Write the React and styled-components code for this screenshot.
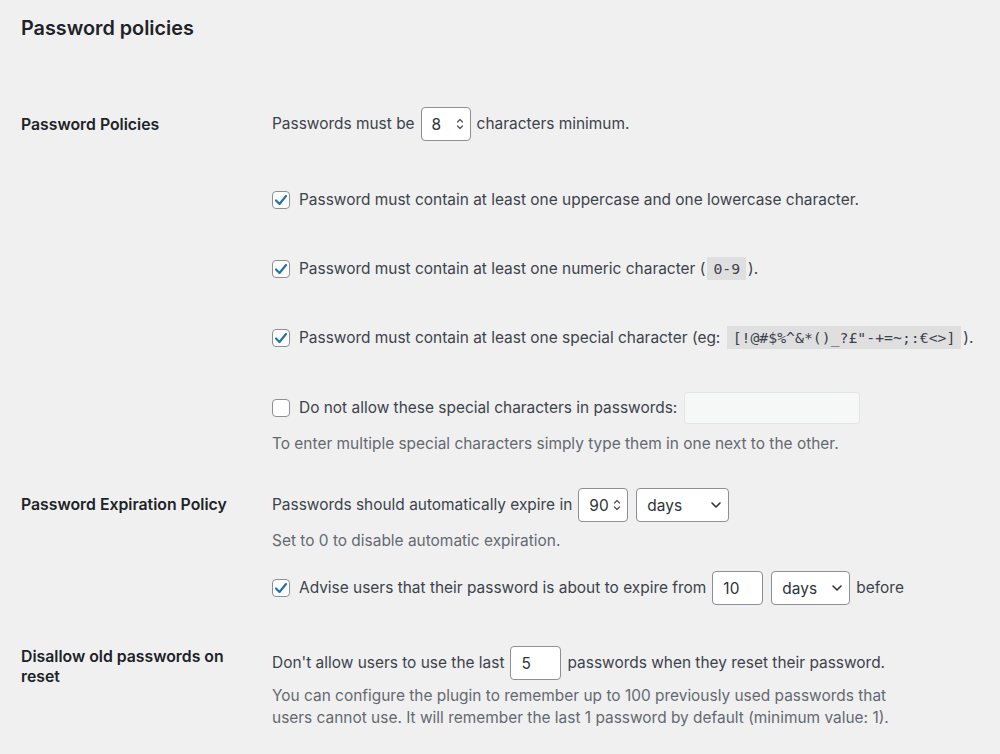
import React from "react";
import styled, { createGlobalStyle } from "styled-components";

const GlobalStyle = createGlobalStyle`
  html, body { margin: 0; padding: 0; }
  body {
    background: #f0f0f1;
    font-family: Inter, "Noto Sans", "Liberation Sans", sans-serif;
    color: #3c434a;
    font-size: 15.45px;
  }
`;

const Page = styled.div`
  width: 1000px;
  height: 754px;
  overflow: hidden;
  padding: 0 21px;
  box-sizing: border-box;
`;

const Title = styled.h1`
  margin: 0;
  padding-top: 14px;
  font-size: 19.8px;
  line-height: 28px;
  font-weight: 600;
  color: #1d2327;
`;

const Section = styled.section`
  display: grid;
  grid-template-columns: 251px 1fr;
  margin-top: ${(p) => p.$top}px;
`;

const Label = styled.div`
  font-size: 15.8px;
  font-weight: 600;
  line-height: 20px;
  color: #1d2327;
  padding-top: ${(p) => p.$pad || 7}px;
  padding-right: 20px;
`;

const Fields = styled.div`
  display: flex;
  flex-direction: column;
`;

const Row = styled.div`
  display: flex;
  align-items: center;
  gap: 6px;
  height: 34px;
  white-space: nowrap;
  margin-top: ${(p) => p.$top || 0}px;
`;

const Text = styled.span`
  line-height: 20px;
`;

const Note = styled.p`
  margin: ${(p) => p.$top || 0}px 0 0;
  line-height: 22px;
  color: #646970;
  max-width: 640px;
`;

const Box = styled.div`
  box-sizing: border-box;
  display: flex;
  align-items: center;
  justify-content: space-between;
  width: ${(p) => p.$w}px;
  height: 34px;
  padding: 0 6px 0 10px;
  background: #fff;
  border: 1px solid #8c8f94;
  border-radius: 4px;
  color: #2c3338;
  margin-left: ${(p) => p.$ml || 0}px;
`;

const DisabledField = styled.div`
  box-sizing: border-box;
  width: 176px;
  height: 32px;
  margin-left: 1px;
  background: #f6f7f7;
  border: 1px solid #e4e4e7;
  border-radius: 4px;
`;

const Check = styled.span`
  box-sizing: border-box;
  flex: none;
  width: 18px;
  height: 18px;
  margin-right: 3px;
  border: 1px solid #8c8f94;
  border-radius: 4px;
  background: #fff;
  display: flex;
  align-items: center;
  justify-content: center;
`;

const Code = styled.code`
  font-family: "DejaVu Sans Mono", "Liberation Mono", monospace;
  font-size: 14.8px;
  background: rgba(0, 0, 0, 0.07);
  padding: 3px 6px;
  margin: 0 2px;
  color: #3c434a;
`;

const Spinner = () => (
  <svg width="8" height="14" viewBox="0 0 8 14" fill="none" stroke="#555" strokeWidth="1.3" strokeLinecap="round" strokeLinejoin="round">
    <path d="M1.5 5 L4 2.5 L6.5 5" />
    <path d="M1.5 9 L4 11.5 L6.5 9" />
  </svg>
);

const Chevron = () => (
  <svg width="12" height="8" viewBox="0 0 12 8" fill="none" stroke="#2c3338" strokeWidth="1.6" strokeLinecap="round" strokeLinejoin="round">
    <path d="M2 2 L6 6 L10 2" />
  </svg>
);

const Tick = () => (
  <svg width="14" height="12" viewBox="0 0 14 12" fill="none" stroke="#2271b1" strokeWidth="2.2" strokeLinecap="round" strokeLinejoin="round">
    <path d="M2 6.5 L5.5 10 L12 2" />
  </svg>
);

const NumberBox = ({ value, w = 50, spin = true, ml }) => (
  <Box $w={w} $ml={ml}>
    <span>{value}</span>
    {spin && <Spinner />}
  </Box>
);

const Select = ({ value, w, ml }) => (
  <Box $w={w} $ml={ml}>
    <span>{value}</span>
    <Chevron />
  </Box>
);

const CheckRow = ({ checked, children, top }) => (
  <Row $top={top}>
    <Check>{checked && <Tick />}</Check>
    {children}
  </Row>
);

export default function App() {
  return (
    <Page>
      <GlobalStyle />
      <Title>Password policies</Title>

      <Section $top={65}>
        <Label $pad={8}>Password Policies</Label>
        <Fields>
          <Row>
            <Text>Passwords must be</Text>
            <NumberBox value="8" />
            <Text>characters minimum.</Text>
          </Row>
          <CheckRow checked top={42}>
            <Text>Password must contain at least one uppercase and one lowercase character.</Text>
          </CheckRow>
          <CheckRow checked top={35}>
            <Text>
              Password must contain at least one numeric character (<Code>0-9</Code>).
            </Text>
          </CheckRow>
          <CheckRow checked top={35}>
            <Text>
              Password must contain at least one special character (eg: <Code>{'[!@#$%^&*()_?£"-+=~;:€<>]'}</Code>).
            </Text>
          </CheckRow>
          <CheckRow top={36}>
            <Text>Do not allow these special characters in passwords:</Text>
            <DisabledField />
          </CheckRow>
          <Note $top={8}>To enter multiple special characters simply type them in one next to the other.</Note>
        </Fields>
      </Section>

      <Section $top={33}>
        <Label>Password Expiration Policy</Label>
        <Fields>
          <Row>
            <Text>Passwords should automatically expire in</Text>
            <NumberBox value="90" />
            <Select value="days" w={93} ml={2} />
          </Row>
          <Note $top={8}>Set to 0 to disable automatic expiration.</Note>
          <CheckRow checked top={19}>
            <Text>Advise users that their password is about to expire from</Text>
            <NumberBox value="10" w={51} spin={false} />
            <Select value="days" w={79} ml={2} />
            <Text>before</Text>
          </CheckRow>
        </Fields>
      </Section>

      <Section $top={41}>
        <Label $pad={1}>Disallow old passwords on reset</Label>
        <Fields>
          <Row>
            <Text>Don't allow users to use the last</Text>
            <NumberBox value="5" w={51} spin={false} />
            <Text>passwords when they reset their password.</Text>
          </Row>
          <Note $top={5}>
            You can configure the plugin to remember up to 100 previously used passwords that users cannot use. It will remember the last 1 password by default (minimum value: 1).
          </Note>
        </Fields>
      </Section>
    </Page>
  );
}
